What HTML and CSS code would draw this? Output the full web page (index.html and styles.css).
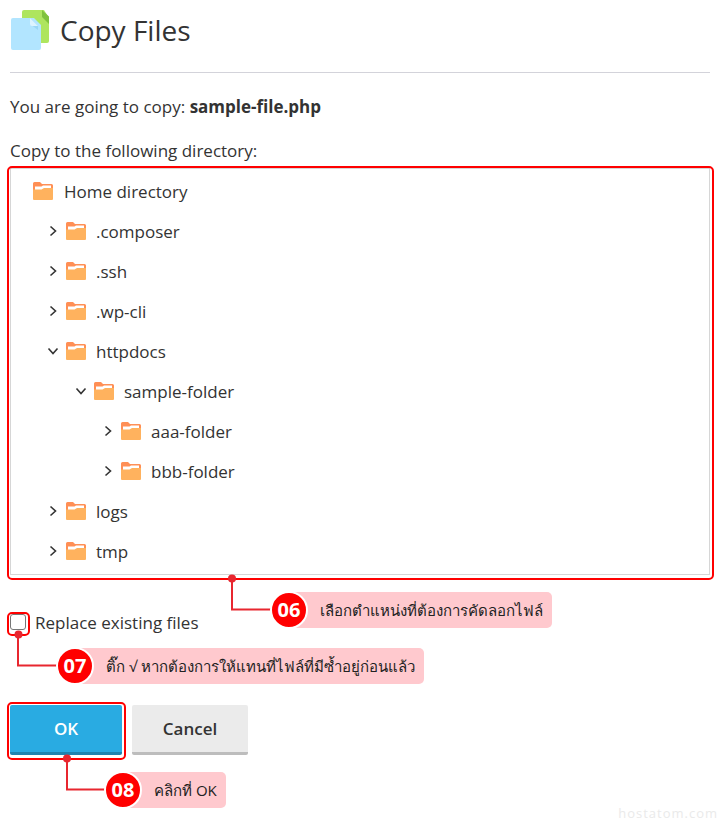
FILE: index.html
```html
<!DOCTYPE html>
<html lang="en">
<head>
<meta charset="utf-8">
<title>Copy Files</title>
<link rel="stylesheet" href="styles.css">
</head>
<body>
<svg width="0" height="0" class="defs">
  <defs>
    <symbol id="folder" viewBox="0 0 20 18">
      <path d="M0 1.5Q0 0 1.5 0H7L9 2H18.500Q20 2 20 3.500V8H0Z" fill="#ff8f55"/>
      <path d="M2 4.500H8.500L10 3.500H18V9H2Z" fill="#fff"/>
      <path d="M0 7.500H8.500L11 6H20V17Q20 18 19 18H1Q0 18 0 17Z" fill="#ffb25e"/>
    </symbol>
    <symbol id="chev-right" viewBox="0 0 14 14">
      <path d="M4.500 2.500L9.500 7L4.500 11.500" fill="none" stroke="#333" stroke-width="1.600"/>
    </symbol>
    <symbol id="chev-down" viewBox="0 0 14 14">
      <path d="M2.500 4.500L7 9.500L11.500 4.500" fill="none" stroke="#333" stroke-width="1.600"/>
    </symbol>
  </defs>
</svg>
<main class="page">
  <header class="head">
    <svg class="head-icon" width="38" height="40" viewBox="0 0 38 40">
      <path d="M13 0H33L38 8V31Q38 33 36 33H13Q11 33 11 31V2Q11 0 13 0Z" fill="#aee55f"/>
      <path d="M31 0L38 6.500V14L31 7Z" fill="#7fc23c"/>
      <path d="M2 8H23L30 15V38Q30 40 28 40H2Q0 40 0 38V10Q0 8 2 8Z" fill="#b2e5ff"/>
      <path d="M19 8L27 16V20L19 14Z" fill="#9bd6f5"/>
      <path d="M19 8L27 16H21Q19 16 19 14Z" fill="#ddf3ff"/>
    </svg>
    <h1 class="title">Copy Files</h1>
  </header>
  <p class="going">You are going to copy: <b>sample-file.php</b></p>
  <p class="label">Copy to the following directory:</p>
  <div class="tree">
    <div class="row home"><svg class="folder"><use href="#folder"/></svg><span>Home directory</span></div>
    <div class="row l1"><svg class="chev"><use href="#chev-right"/></svg><svg class="folder"><use href="#folder"/></svg><span>.composer</span></div>
    <div class="row l1"><svg class="chev"><use href="#chev-right"/></svg><svg class="folder"><use href="#folder"/></svg><span>.ssh</span></div>
    <div class="row l1"><svg class="chev"><use href="#chev-right"/></svg><svg class="folder"><use href="#folder"/></svg><span>.wp-cli</span></div>
    <div class="row l1"><svg class="chev"><use href="#chev-down"/></svg><svg class="folder"><use href="#folder"/></svg><span>httpdocs</span></div>
    <div class="row l2"><svg class="chev"><use href="#chev-down"/></svg><svg class="folder"><use href="#folder"/></svg><span>sample-folder</span></div>
    <div class="row l3"><svg class="chev"><use href="#chev-right"/></svg><svg class="folder"><use href="#folder"/></svg><span>aaa-folder</span></div>
    <div class="row l3"><svg class="chev"><use href="#chev-right"/></svg><svg class="folder"><use href="#folder"/></svg><span>bbb-folder</span></div>
    <div class="row l1"><svg class="chev"><use href="#chev-right"/></svg><svg class="folder"><use href="#folder"/></svg><span>logs</span></div>
    <div class="row l1"><svg class="chev"><use href="#chev-right"/></svg><svg class="folder"><use href="#folder"/></svg><span>tmp</span></div>
  </div>
  <label class="replace"><span class="check"></span>Replace existing files</label>
  <div class="actions">
    <button class="btn ok" type="button">OK</button>
    <button class="btn cancel" type="button">Cancel</button>
  </div>
</main>

<div class="hl hl-tree"></div>
<div class="hl hl-check"></div>
<div class="hl hl-ok"></div>

<svg class="wires" width="720" height="821" viewBox="0 0 720 821">
  <path d="M232 579V609.500H275M18 634V665.500H62M67 758V789.500H110" fill="none" stroke="#e8262f" stroke-width="2"/>
  <circle cx="232" cy="578.500" r="4" fill="#e8262f"/>
  <circle cx="18.500" cy="634.500" r="4" fill="#e8262f"/>
  <circle cx="67" cy="758.500" r="4" fill="#e8262f"/>
</svg>

<div class="note n06"><span class="num">06</span><span class="msg">เลือกตำแหน่งที่ต้องการคัดลอกไฟล์</span></div>
<div class="note n07"><span class="num">07</span><span class="msg">ติ๊ก √ หากต้องการให้แทนที่ไฟล์ที่มีซ้ำอยู่ก่อนแล้ว</span></div>
<div class="note n08"><span class="num">08</span><span class="msg">คลิกที่ OK</span></div>

<div class="mark">hostatom.com</div>
</body>
</html>
```

FILE: styles.css
```css
* { box-sizing: border-box; }
html, body { margin: 0; height: 821px; overflow: hidden; background: #fff; }
body {
  position: relative;
  font-family: "Open Sans", sans-serif;
  font-size: 17px;
  color: #333;
}
.defs { position: absolute; }
.page { padding: 10px; }
.head {
  display: flex;
  align-items: center;
  gap: 11px;
  height: 63px;
  padding: 0 0 23px 1px;
  border-bottom: 1px solid #d3d3da;
}
.head-icon { flex: none; }
.title { margin: 0; font-size: 28px; font-weight: 400; line-height: 40px; color: #333; }
.going { margin: 22px 0 0; line-height: 23px; }
.going b { font-weight: 700; }
.label { margin: 21px 0 0; line-height: 23px; }
.tree {
  margin-top: 6px;
  height: 407px;
  padding: 2px 0;
  border: 1px solid #d6d6d6;
}
.row { display: flex; align-items: center; height: 40px; }
.row.home { padding-left: 22px; }
.row.l1 { padding-left: 35px; }
.row.l2 { padding-left: 63px; }
.row.l3 { padding-left: 90px; }
.chev { width: 14px; height: 14px; flex: none; margin-right: 6px; }
.folder { width: 20px; height: 18px; flex: none; margin-right: 10px; }
.home .folder { margin-right: 11px; }
.replace { display: flex; align-items: center; height: 24px; margin-top: 35px; color: #333; }
.check {
  width: 16px;
  height: 16px;
  margin-right: 9px;
  background: #fff;
  border: 1.500px solid #777;
  border-radius: 3px;
}
.actions { display: flex; gap: 10px; margin-top: 71px; }
.btn {
  height: 50px;
  border: 0;
  border-radius: 2px;
  font-family: inherit;
  font-size: 17px;
  font-weight: 600;
}
.ok { width: 112px; background: #29abe2; color: #fff; border-bottom: 3px solid #1f84b0; }
.cancel { width: 116px; background: #ebebeb; color: #333; border-bottom: 3px solid #bdbdbd; }

.hl { position: absolute; border: 2px solid #f00; border-radius: 5px; }
.hl-tree { left: 7px; top: 166px; width: 707px; height: 414px; }
.hl-check { left: 7px; top: 612px; width: 23px; height: 24px; }
.hl-ok { left: 7px; top: 702px; width: 119px; height: 58px; }
.wires { position: absolute; left: 0; top: 0; }

.note { position: absolute; display: flex; align-items: center; height: 36px; }
.n06 { left: 270px; top: 592px; }
.n07 { left: 56px; top: 648px; }
.n08 { left: 104px; top: 772px; }
.num {
  position: relative;
  z-index: 1;
  width: 38px;
  height: 38px;
  margin: -1px 0;
  border: 2px solid #fff;
  border-right-color: #fff;
  border-radius: 50%;
  background: #f00;
  color: #fff;
  font-size: 20px;
  font-weight: 700;
  line-height: 34px;
  text-align: center;
}
.msg {
  height: 36px;
  margin-left: -17px;
  padding: 0 9px 0 29px;
  background: #ffc9ce;
  border-radius: 5px;
  color: #222;
  font-size: 15px;
  line-height: 36px;
  white-space: nowrap;
}
.mark {
  position: absolute;
  right: 2px;
  bottom: 0;
  color: #eaeaea;
  font-size: 13px;
  letter-spacing: 1px;
  line-height: 15px;
}
```
